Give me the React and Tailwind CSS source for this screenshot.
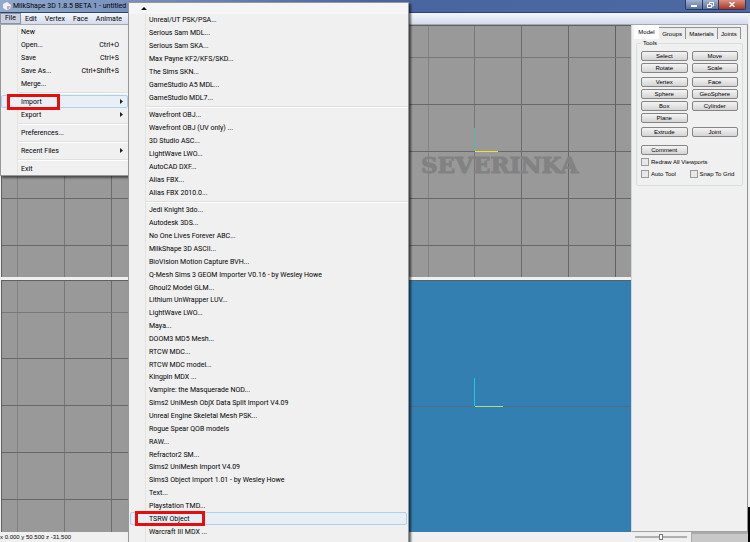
const groups = [
  ['Unreal/UT PSK/PSA...', 'Serious Sam MDL...', 'Serious Sam SKA...', 'Max Payne KF2/KFS/SKD...', 'The Sims SKN...', 'GameStudio A5 MDL...', 'GameStudio MDL7...'],
  ['Wavefront OBJ...', 'Wavefront OBJ (UV only) ...', '3D Studio ASC...', 'LightWave LWO...', 'AutoCAD DXF...', 'Alias FBX...', 'Alias FBX 2010.0...'],
  ['Jedi Knight 3do...', 'Autodesk 3DS...', 'No One Lives Forever ABC...', 'MilkShape 3D ASCII...', 'BioVision Motion Capture BVH...', 'Q-Mesh Sims 3 GEOM Importer V0.16 - by Wesley Howe', 'Ghoul2 Model GLM...', 'Lithium UnWrapper LUV...', 'LightWave LWO...', 'Maya...', 'DOOM3 MD5 Mesh...', 'RTCW MDC...', 'RTCW MDC model...', 'Kingpin MDX ...', 'Vampire: the Masquerade NOD...', 'Sims2 UniMesh ObjX Data Split Import V4.09', 'Unreal Engine Skeletal Mesh PSK...', 'Rogue Spear QOB models', 'RAW...', 'Refractor2 SM...', 'Sims2 UniMesh Import V4.09', 'Sims3 Object Import 1.01 - by Wesley Howe', 'Text...', 'Playstation TMD...', 'TSRW Object', 'Warcraft III MDX ...', 'SOFTIMAGE XSI...'],
];

const fileGroups = [
  [['New', ''], ['Open...', 'Ctrl+O'], ['Save', 'Ctrl+S'], ['Save As...', 'Ctrl+Shift+S'], ['Merge...', '']],
  [['Import', '>'], ['Export', '>']],
  [['Preferences...', '']],
  [['Recent Files', '>']],
  [['Exit', '']],
];

const toolGroups = [
  ['Select', 'Move', 'Rotate', 'Scale'],
  ['Vertex', 'Face', 'Sphere', 'GeoSphere', 'Box', 'Cylinder', 'Plane'],
  ['Extrude', 'Joint'],
];

function Divider() {
  return <div className="ml-4 h-px border-t border-[#e0e0e0] bg-white box-content" />;
}

function Arrow() {
  return (
    <svg className="h-[5px] w-[3px]" viewBox="0 0 3 5"><path d="M0 0L3 2.5L0 5Z" fill="#222" /></svg>
  );
}

function FileMenu() {
  return (
    <div className="absolute left-0 top-[12px] z-10 w-[129px] border border-t-0 border-[#979797] bg-[#f0f0f0] shadow-[2px_2px_2px_rgba(0,0,0,0.5)]">
      <div className="absolute inset-y-px left-4 w-px bg-[#e2e3e3]" />
      {fileGroups.map((g, i) => (
        <div key={i}>
          {i > 0 && <div className="flex h-[5px] flex-col justify-center"><Divider /></div>}
          {g.map(([label, key]) => (
            <button key={label} className={`relative flex h-[13px] w-full items-center justify-between rounded-xs border pl-[19px] pr-1 ${label === 'Import' ? 'border-[#aed0ee] bg-[#e8eff7]' : 'border-transparent'}`}>
              <span>{label}</span>
              {key === '>' ? <Arrow /> : <span className="pr-1">{key}</span>}
              {label === 'Import' && <span className="absolute -top-0.5 left-[5px] h-4 w-[53px] border-3 border-[#e80c0c]" />}
            </button>
          ))}
        </div>
      ))}
    </div>
  );
}

function ImportMenu() {
  const heights = ['h-[90px]', 'h-[90px]', 'h-[347px]'];
  return (
    <div className="absolute left-[128px] top-0.5 z-20 w-[281px] border border-[#979797] bg-[#f0f0f0] shadow-[2px_2px_2px_rgba(0,0,0,0.6)]">
      <button aria-label="Scroll up" className="flex h-[11px] w-full items-center bg-[#f5f5f5] pl-3">
        <svg className="h-[3px] w-[6px]" viewBox="0 0 6 3"><path d="M0 3L3 0L6 3Z" fill="#000" /></svg>
      </button>
      <div className="relative">
        <div className="absolute inset-y-0 left-4 w-px bg-[#e2e3e3]" />
        {groups.map((g, i) => (
          <div key={i}>
            {i > 0 && <div className="flex h-[5px] flex-col justify-center"><Divider /></div>}
            <div className={`grid auto-rows-fr ${heights[i]}`}>
              {g.map((label) => (
                <button key={label} className={`relative mx-px flex min-h-0 items-center rounded-xs border pl-[18px] ${label === 'TSRW Object' ? 'border-[#aed0ee] bg-[#e8eff4]' : 'border-transparent'}`}>
                  {label}
                  {label === 'TSRW Object' && <span className="absolute -top-0.5 left-1 h-[15px] w-[70px] border-3 border-[#e80c0c]" />}
                </button>
              ))}
            </div>
          </div>
        ))}
      </div>
    </div>
  );
}

function Grid({ xs, ys, axis }) {
  return (
    <svg className="block h-full w-full" shapeRendering="crispEdges">
      {xs.map((x, i) => <rect key={x} x={x} y="0" width="1" height="100%" fill={['#828282', '#777777', '#6c6c6c', '#686868', '#606060'][i]} />)}
      {ys.map((y, i) => <rect key={y} x="0" y={y} width="100%" height="1" fill={i ? '#686868' : '#787878'} />)}
      {axis && <><rect x="155" y="102" width="1" height="23" fill="#50b8b8" /><rect x="156" y="125" width="23" height="1" fill="#ece430" /></>}
    </svg>
  );
}

function Viewports() {
  return (
    <main className="grid min-w-0 flex-1 grid-cols-2 grid-rows-2 gap-x-1 gap-y-[3px] bg-[#f0f0f0] pl-px">
      <div className="border-l border-t border-[#606060] bg-[#999]"><Grid xs={[15, 62, 109]} ys={[31, 78, 125, 172, 219]} /></div>
      <div className="relative border-l border-t border-[#606060] bg-[#999]">
        <Grid xs={[109, 155, 202, 249, 296]} ys={[31, 78, 125, 172, 219]} axis />
        <span className="absolute left-[102px] top-[126px] font-['DejaVu_Serif'] text-[23px]/[26px] font-bold text-[#828282] [-webkit-text-stroke:1px_#828282]">SEVERINKA</span>
      </div>
      <div className="border-l border-t border-[#606060] bg-[#999]"><Grid xs={[15, 62, 109]} ys={[31, 77, 124, 171, 218]} /></div>
      <div className="border-l border-t border-[#606060] bg-[#337fb2]">
        <svg className="block h-full w-full" shapeRendering="crispEdges">
          <rect y="125" width="100%" height="1" fill="#526b80" />
          <rect x="155" y="97" width="1" height="28" fill="#20c8e0" />
          <rect x="156" y="125" width="28" height="1" fill="#b0e070" />
        </svg>
      </div>
    </main>
  );
}

function ToolButton({ children }) {
  return <button className="h-2.5 rounded-xs border border-[#858585] bg-linear-to-b from-[#f4f4f4] to-[#d4d4d4] text-center leading-[8px]">{children}</button>;
}

function Check({ label }) {
  return (
    <label className="flex items-center gap-0.5 whitespace-nowrap">
      <input type="checkbox" className="size-2 shrink-0 appearance-none border border-[#999] bg-[#e8e8e8]" />
      {label}
    </label>
  );
}

function Panel() {
  return (
    <aside className="flex w-[116px] flex-col border-b border-l border-b-[#a0a0a0] border-l-[#d0d8d8] bg-[#f0f0f0] pl-0.5 font-['Liberation_Sans',sans-serif] text-[6px]/[10px]">
      <div className="flex h-3.5 items-end pr-1.5" role="tablist">
        <button role="tab" aria-selected="true" className="h-3.5 w-[25px] bg-white">Model</button>
        {['Groups', 'Materials', 'Joints'].map((t) => (
          <button key={t} role="tab" className="h-3 grow border-r border-t border-[#909090] bg-[#ececec]">{t}</button>
        ))}
      </div>
      <div className="flex-1 bg-[#f0f0f0] px-[2px]">
        <fieldset className="-mt-px mr-0.5 rounded-xs border border-[#d5dfe0] pb-1.5 pl-1 pr-1">
          <legend className="px-0.5">Tools</legend>
          <div className="flex flex-col gap-1 pt-[3px]">
            {toolGroups.map((g, i) => (
              <div key={i} className="grid grid-cols-2 gap-x-1 gap-y-0.5">{g.map((t) => <ToolButton key={t}>{t}</ToolButton>)}</div>
            ))}
            <div className="grid grid-cols-2 gap-x-1 pt-1"><ToolButton>Comment</ToolButton></div>
          </div>
          <div className="flex flex-col gap-0.5 pt-0.5">
            <Check label="Redraw All Viewports" />
            <div className="grid grid-cols-2"><Check label="Auto Tool" /><Check label="Snap To Grid" /></div>
          </div>
        </fieldset>
      </div>
    </aside>
  );
}

export default function App() {
  return (
    <div className="relative flex h-screen flex-col overflow-hidden bg-[#f0f0f0] pr-0.5 font-[Roboto,sans-serif] text-[7px]/[10px] whitespace-nowrap text-black">
      <header className="-mr-0.5 flex h-[13px] items-center gap-0.5 border-b border-[#304468] bg-linear-to-r from-[#91a9cc] via-[#4965a0] via-50% to-[#4c69a2] pl-[3px]">
        <svg className="size-2" viewBox="0 0 8 8"><path d="M0 2L4 0L8 3L7 7L3 8L0 6Z" fill="#f0f0f4" /><path d="M4 4L7 4L6 7L4 7Z" fill="#d9a69f" /></svg>
        <h1 className="flex-1 text-[7px]/[12px]">MilkShape 3D 1.8.5 BETA 1 - untitled</h1>
        <div className="mr-1 flex h-2.5 self-start overflow-hidden rounded-b-xs border border-t-0 border-[#263a60] text-white">
          <button aria-label="Minimize" className="flex w-[17px] items-end justify-center border-r border-[#263a60] bg-linear-to-b from-[#a4b3ce] to-[#5a719f] pb-0.5"><span className="h-0.5 w-1.5 bg-white" /></button>
          <button aria-label="Restore" className="flex w-4 items-center justify-center border-r border-[#263a60] bg-linear-to-b from-[#a4b3ce] to-[#5a719f]"><svg className="h-1.5 w-[7px]" viewBox="0 0 7 6"><path d="M2.5 2V.5H6.5V4H5M.5 2.5H4.5V5.5H.5Z" fill="none" stroke="#fff" /></svg></button>
          <button aria-label="Close" className="flex w-[26px] items-center justify-center bg-linear-to-b from-[#d89080] to-[#b03020]"><svg className="h-[5px] w-1.5" viewBox="0 0 6 5"><path d="M.5 0L5.5 5M5.5 0L.5 5" stroke="#fff" strokeWidth="1.4" /></svg></button>
        </div>
      </header>
      <div className="relative">
        <nav className="flex h-3 items-center border-b border-[#a5a9b5] bg-linear-to-b from-[#f4f6fb] to-[#d4dbed]">
          {['File', 'Edit', 'Vertex', 'Face', 'Animate'].map((m) => (
            <button key={m} className={`h-[11px] px-1 ${m === 'File' ? 'border border-[#8a93a8] bg-[#c8d0e0] leading-[9px]' : ''}`}>{m}</button>
          ))}
        </nav>
        <FileMenu />
      </div>
      <div className="flex min-h-0 flex-1 border-r border-[#909090]">
        <Viewports />
        <Panel />
      </div>
      <footer className="flex h-2.5 items-center font-['Liberation_Sans',sans-serif] text-[6px]/[10px]">
        <span className="flex-1">x 0.000 y 50.500 z -31.500</span>
        <input type="range" aria-label="Zoom" className="mr-1 h-2 w-[52px] appearance-none bg-transparent [&::-webkit-slider-runnable-track]:h-0.5 [&::-webkit-slider-runnable-track]:bg-[#b0b0b0] [&::-webkit-slider-thumb]:-mt-0.5 [&::-webkit-slider-thumb]:h-1.5 [&::-webkit-slider-thumb]:w-1 [&::-webkit-slider-thumb]:appearance-none [&::-webkit-slider-thumb]:border [&::-webkit-slider-thumb]:border-[#777] [&::-webkit-slider-thumb]:bg-white" />
        <div className="h-full w-[57px] border-l border-t-2 border-[#aaa] bg-[#c8c8c8]" />
      </footer>
      <div className="absolute bottom-0 right-0 h-[35px] w-0.5 bg-black" />
      <ImportMenu />
    </div>
  );
}
